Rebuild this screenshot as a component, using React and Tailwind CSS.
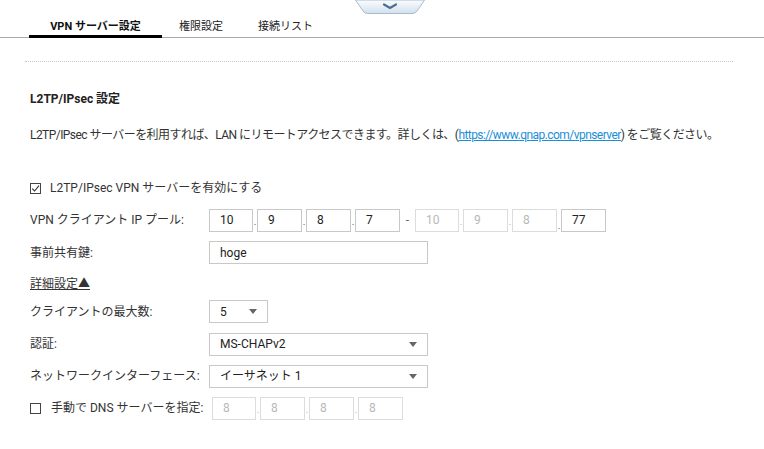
const font = { fontFamily: "Roboto, 'Noto Sans CJK JP', sans-serif" };

function Box({ value, disabled, w = 'w-[44px]' }) {
  return (
    <div
      className={`${w} h-[23px] border flex items-center pl-[10px] text-[12px] ${
        disabled ? 'border-[#dcdcdc] text-[#b8b8b8]' : 'border-[#c8c8c8] text-[#222]'
      }`}
    >
      {value}
    </div>
  );
}

function Dot({ disabled }) {
  return (
    <span className={`w-[4px] text-[10px] self-end pb-[3px] text-center ${disabled ? 'text-[#bbb]' : 'text-[#666]'}`}>.</span>
  );
}

function IpGroup({ values, disabled }) {
  return (
    <div className="flex items-center">
      {values.map((v, i) => (
        <div key={i} className="flex items-center">
          {i > 0 && <Dot disabled={disabled} />}
          <Box value={v} disabled={disabled} w={i === 0 ? 'w-[44px]' : 'w-[45px]'} />
        </div>
      ))}
    </div>
  );
}

function Select({ value, w }) {
  return (
    <div className={`${w} h-[23px] border border-[#c8c8c8] flex items-center justify-between pl-[10px] pr-[10px] text-[12px] text-[#222]`}>
      <span>{value}</span>
      <svg width="8" height="5" viewBox="0 0 8 5">
        <path d="M0 0 L8 0 L4 5 Z" fill="#666" />
      </svg>
    </div>
  );
}

function CheckBox({ checked }) {
  return (
    <span className="w-[11px] h-[11px] border border-[#444] flex items-center justify-center bg-white">
      {checked && (
        <svg width="9" height="9" viewBox="0 0 9 9">
          <path d="M1.2 4.6 L3.6 7 L8 1.6" fill="none" stroke="#333" strokeWidth="1.1" />
        </svg>
      )}
    </span>
  );
}

function Row({ label, children, className = 'h-[32px]' }) {
  return (
    <div className={`flex items-center ${className}`}>
      <div className="w-[179px] text-[12px] text-[#333]">{label}</div>
      {children}
    </div>
  );
}

export default function App() {
  return (
    <div className="relative w-[764px] h-[449px] bg-white overflow-hidden" style={font}>
      {/* collapse handle */}
      <div className="absolute left-[355px] top-0 w-[70px] h-[14px]">
        <svg width="70" height="14" viewBox="0 0 70 14">
          <defs>
            <linearGradient id="hg" x1="0" y1="0" x2="0" y2="1">
              <stop offset="0" stopColor="#fbfdff" />
              <stop offset="1" stopColor="#d3e0ec" />
            </linearGradient>
          </defs>
          <path d="M0.5 0 L8 11 Q9.5 13.5 13 13.5 L57 13.5 Q60.5 13.5 62 11 L69.5 0 Z" fill="url(#hg)" stroke="#a9bccd" />
          <path d="M29 4.5 L35 8 L41 4.5" fill="none" stroke="#4d6f8f" strokeWidth="2.2" strokeLinecap="round" />
        </svg>
      </div>

      {/* tabs */}
      <div className="flex h-[38px] pl-[29px] border-b border-[#aaaaaa]">
        <div className="w-[133px] pt-[21px] border-b-[3px] border-black -mb-[1px] text-center text-[11px] leading-[12px] font-bold text-[#111]">
          VPN サーバー設定
        </div>
        <div className="ml-[17px] pt-[21px] text-[11px] leading-[12px] text-[#222]">権限設定</div>
        <div className="ml-[35px] pt-[21px] text-[11px] leading-[12px] text-[#222]">接続リスト</div>
      </div>

      <div className="px-[30px]">
        <div className="mt-[23px] -mx-[5px] w-[708px] border-t border-dotted border-[#c8c8c8]" />

        <div className="mt-[28px] text-[12px] font-bold text-[#222] leading-[18px]">L2TP/IPsec 設定</div>

        <div className="mt-[18px] text-[12px] text-[#333] leading-[18px] whitespace-nowrap tracking-[-0.55px]">
          L2TP/IPsec サーバーを利用すれば、LAN にリモートアクセスできます。詳しくは、(
          <span className="text-[#1a8fd8] underline">https://www.qnap.com/vpnserver</span>) をご覧ください。
        </div>

        <div className="mt-[28px] flex items-center h-[32px] text-[12px] text-[#333]">
          <CheckBox checked />
          <span className="ml-[9px]">L2TP/IPsec VPN サーバーを有効にする</span>
        </div>

        <Row label="VPN クライアント IP プール:">
          <IpGroup values={['10', '9', '8', '7']} />
          <span className="w-[15px] text-center text-[12px] text-[#666]">-</span>
          <IpGroup values={['10', '9', '8']} disabled />
          <Dot />
          <Box value="77" w="w-[45px]" />
        </Row>
        <Row label="事前共有鍵:" className="h-[33px]">
          <Box value="hoge" w="w-[219px]" />
        </Row>
        <div className="h-[26px] flex items-center pt-[3px] text-[12px] text-[#333]">
          <span className="underline">詳細設定▲</span>
        </div>
        <Row label="クライアントの最大数:" className="h-[33px]">
          <Select value="5" w="w-[59px]" />
        </Row>
        <Row label="認証:">
          <Select value="MS-CHAPv2" w="w-[219px]" />
        </Row>
        <Row label="ネットワークインターフェース:">
          <Select value="イーサネット 1" w="w-[219px]" />
        </Row>
        <div className="flex items-center h-[32px]">
          <div className="w-[182px] flex items-center text-[12px] text-[#333]">
            <CheckBox />
            <span className="ml-[10px]">手動で DNS サーバーを指定:</span>
          </div>
          <IpGroup values={['8', '8', '8', '8']} disabled />
        </div>
      </div>
    </div>
  );
}
